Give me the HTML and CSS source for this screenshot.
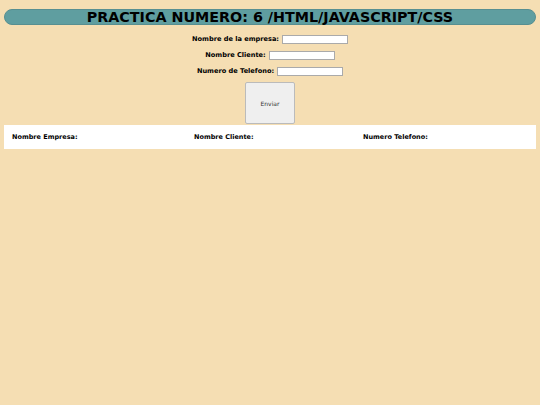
FILE: index.html
```html
<!DOCTYPE html>
<html>
<head>
<meta charset="utf-8">
<link rel="stylesheet" href="styles.css">
</head>
<body>
<h1 class="title">PRACTICA NUMERO: 6 /HTML/JAVASCRIPT/CSS</h1>
<form class="form">
  <div class="row"><label>Nombre de la empresa:</label><input type="text" class="field"></div>
  <div class="row"><label>Nombre Cliente:</label><input type="text" class="field"></div>
  <div class="row"><label>Numero de Telefono:</label><input type="text" class="field"></div>
  <button type="button" class="send">Enviar</button>
</form>
<div class="results">
  <span class="col c1">Nombre Empresa:</span>
  <span class="col c2">Nombre Cliente:</span>
  <span class="col c3">Numero Telefono:</span>
</div>
</body>
</html>
```
FILE: styles.css
```css
html, body { margin: 0; padding: 0; }
body {
  background: #f5deb3;
  font-family: "DejaVu Sans", Verdana, sans-serif;
  padding: 9px 4px 0 4px;
}
.title {
  margin: 0;
  background: #5f9ea0;
  border: 1px solid #578f91;
  border-radius: 8px;
  height: 14px;
  line-height: 15px;
  text-align: center;
  font-size: 14.3px;
  font-weight: bold;
  color: #000;
}
.form {
  display: flex;
  flex-direction: column;
  align-items: center;
  margin-top: 6px;
}
.row {
  display: flex;
  align-items: center;
  height: 16px;
  font-size: 6.6px;
  font-weight: bold;
}
.row label { margin-right: 3px; }
.field {
  width: 60px;
  height: 5px;
  padding: 1px 2px;
  border: 1px solid #aaa;
  background: #fff;
  margin: 0;
}
.send {
  margin-top: 3px;
  width: 50px;
  height: 42px;
  background: #efefef;
  border: 1px solid #bbb;
  border-radius: 2px;
  font-family: "DejaVu Sans", sans-serif;
  font-size: 6px;
  color: #333;
  padding: 0;
}
.results {
  margin-top: 1px;
  background: #fff;
  height: 24px;
  display: flex;
  align-items: center;
  font-size: 6.5px;
  font-weight: bold;
}
.c1 { margin-left: 8px; width: 182px; }
.c2 { width: 169px; }
```
